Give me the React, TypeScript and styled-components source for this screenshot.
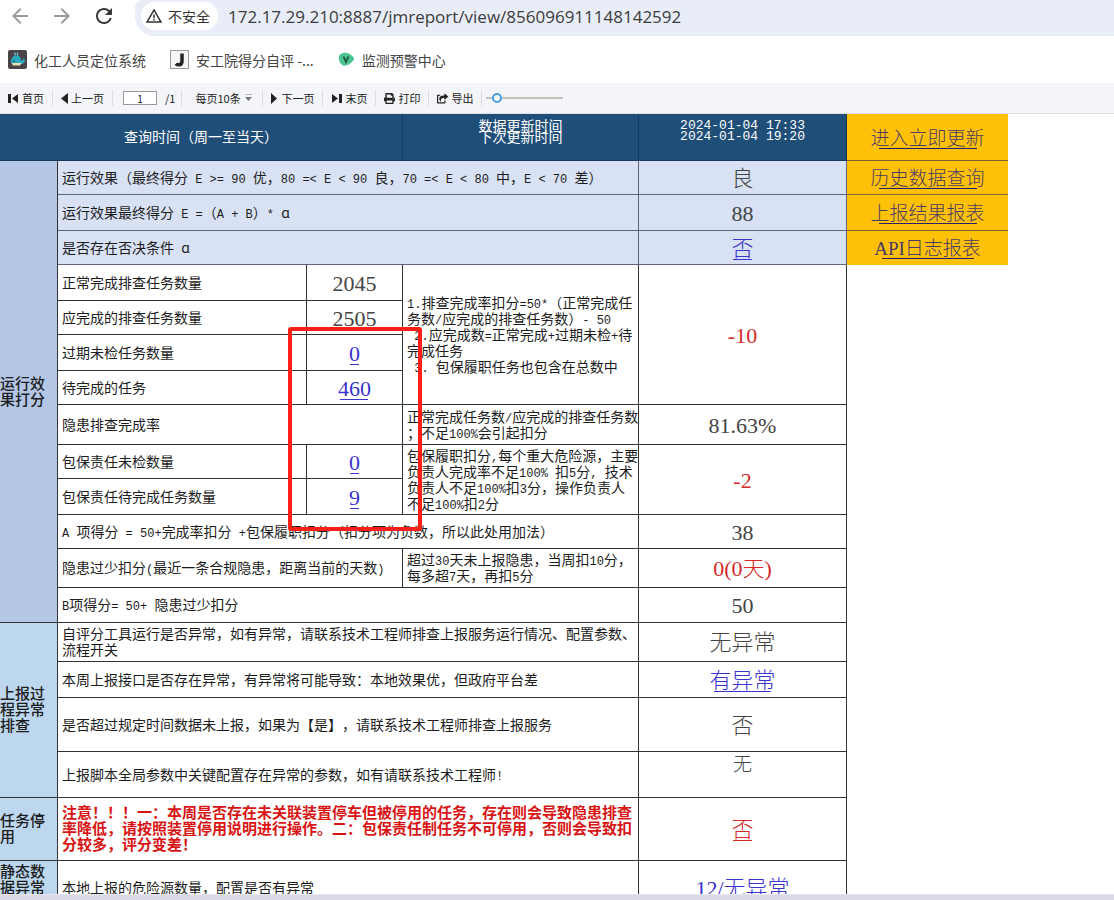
import React from 'react';
import styled, { createGlobalStyle, css } from 'styled-components';
import { MdArrowBack, MdArrowForward, MdRefresh, MdWarningAmber } from 'react-icons/md';
import { FaPrint, FaShareSquare } from 'react-icons/fa';

const cjk = '"Noto Sans CJK SC", sans-serif';

const GlobalStyle = createGlobalStyle`
  * { box-sizing: border-box; }
  body {
    margin: 0;
    background: #fff;
    font-family: ${cjk};
    color: #1c1c1c;
    text-spacing-trim: space-all;
  }
  button, input, select { font: inherit; color: inherit; }
`;

const Page = styled.div`
  display: flex;
  flex-direction: column;
  height: 100vh;
  overflow: hidden;
`;

/* ---------- browser chrome ---------- */

const AddressRow = styled.header`
  display: flex;
  align-items: stretch;
  flex: none;
  height: 36px;
`;

const NavButtons = styled.nav`
  display: flex;
  align-items: center;
  gap: 18px;
  padding: 0 19px 4px 8px;
`;

const NavButton = styled.button<{ $muted?: boolean }>`
  display: flex;
  padding: 0;
  border: 0;
  background: none;
  font-size: 24px;
  color: ${(p) => (p.$muted ? '#9b9b9b' : '#3a3a3a')};
`;

const Omnibox = styled.div`
  display: flex;
  align-items: flex-start;
  flex: 1;
  gap: 10px;
  padding: 2px 6px 0;
  border-radius: 8px 0 0 20px;
  background: #e9edf7;
`;

const SecurityChip = styled.button`
  display: flex;
  align-items: center;
  gap: 5px;
  height: 28px;
  padding: 0 8px 0 4px;
  border: 0;
  border-radius: 14px;
  background: #fff;
  font-size: 14px;
  color: #333;
  white-space: nowrap;

  svg { font-size: 18px; }
`;

const UrlInput = styled.input`
  flex: 1;
  min-width: 0;
  height: 28px;
  padding: 0;
  border: 0;
  outline: 0;
  background: none;
  font-family: "Open Sans", sans-serif;
  font-size: 17px;
  color: #3c3c3c;
`;

const Bookmarks = styled.nav`
  display: flex;
  align-items: center;
  flex: none;
  gap: 24px;
  height: 47px;
  padding: 0 8px;
`;

const Bookmark = styled.a`
  display: flex;
  align-items: center;
  gap: 7px;
  font-size: 14px;
  color: #444;
  text-decoration: none;
  white-space: nowrap;
`;

/* ---------- report toolbar ---------- */

const Toolbar = styled.div`
  display: flex;
  align-items: center;
  flex: none;
  height: 31px;
  border-bottom: 1px solid #dcdee2;
  background: #f4f5f8;
  font-size: 11px;
  color: #222;
`;

const group = css`
  display: flex;
  align-items: center;
  height: 16px;
  padding: 0 8px;
  border: 0;
  border-right: 1px solid #dcdcdf;
  background: none;
  white-space: nowrap;
`;

const ToolButton = styled.button`
  ${group}
  gap: 3px;
`;

const PageGroup = styled.label`
  ${group}
  gap: 8px;
  padding: 0 6px 0 10px;
`;

const PageInput = styled.input`
  width: 34px;
  height: 14px;
  padding: 0;
  border: 1px solid #999;
  background: #fff;
  font-size: 10px;
  text-align: center;
`;

const SizeGroup = styled.label`
  ${group}
  gap: 4px;
  padding: 0 10px 0 13px;
`;

const SizeSelect = styled.select`
  appearance: none;
  padding: 0;
  border: 0;
  background: none;
`;

const ZoomSlider = styled.input`
  appearance: none;
  width: 77px;
  height: 10px;
  margin: 0 0 0 4px;
  background: linear-gradient(#c4c0ba, #c4c0ba) center / 100% 2px no-repeat;

  &::-webkit-slider-thumb {
    appearance: none;
    width: 10px;
    height: 10px;
    border: 2px solid #4a9be0;
    border-radius: 50%;
    background: #fff;
  }
`;

/* ---------- report sheet ---------- */

const Sheet = styled.main`
  position: relative;
  flex: 1;
  min-height: 0;
  overflow: hidden;
`;

const Table = styled.table`
  table-layout: fixed;
  width: 1008px;
  border-collapse: separate;
  border-spacing: 0;
  font-size: 14px;
  line-height: 16px;
`;

const Col = styled.col<{ $w: number }>`
  width: ${(p) => p.$w}px;
`;

const Row = styled.tr<{ $h: number }>`
  height: ${(p) => p.$h}px;
`;

const cell = css`
  padding: 0 0 2px 4px;
  border: solid #333;
  border-width: 0 1px 1px 0;
  white-space: pre;
  text-align: left;
  font-weight: 400;
`;

const HeadCell = styled.th<{ $stacked?: boolean }>`
  ${cell}
  padding: 0 0 3px;
  border-color: #173a5c;
  background: #1f4e79;
  color: #fff;
  text-align: center;
  ${(p) => p.$stacked && css`
    padding-top: 6px;
    line-height: 11px;
    vertical-align: top;
  `}
`;

const GroupCell = styled.th<{ $bg: string; $top?: boolean }>`
  ${cell}
  padding: 2px 0 4px;
  background: ${(p) => p.$bg};
  font-size: 15px;
  font-weight: 500;
  vertical-align: ${(p) => (p.$top ? 'top' : 'middle')};
`;

const TextCell = styled.td<{ $tint?: boolean }>`
  ${cell}
  ${(p) => p.$tint && 'background: #d9e2f5; border-color: #5f6678;'}
`;

const WarningCell = styled(TextCell)`
  font-size: 15px;
  font-weight: 700;
  color: #d81414;
`;

const ValueCell = styled.td<{ $tint?: boolean; $red?: boolean; $top?: boolean }>`
  ${cell}
  padding: 2px 0 0;
  font-family: "Liberation Serif", ${cjk};
  font-size: 22px;
  font-weight: 300;
  line-height: 22px;
  text-align: center;
  color: ${(p) => (p.$red ? '#d42a2a' : '#444')};
  vertical-align: ${(p) => (p.$top ? 'top' : 'middle')};
  ${(p) => p.$top && 'font-size: 19px;'}
  ${(p) => p.$tint && 'background: #d9e2f5; border-color: #5f6678;'}
`;

const ActionCell = styled.td<{ $last?: boolean }>`
  ${cell}
  padding: 3px 0 0;
  border-right: 0;
  border-color: ${(p) => (p.$last ? '#ffc107' : '#7d6324')};
  background: #ffc107;
  font-family: "Liberation Serif", ${cjk};
  font-weight: 300;
  text-align: center;
`;

const CellLink = styled.a<{ $red?: boolean }>`
  display: inline-block;
  color: ${(p) => (p.$red ? '#d42a2a' : '#3a33cc')};
  background: linear-gradient(currentColor, currentColor) center bottom / 86% 1px no-repeat;
  text-decoration: none;
`;

const ActionLink = styled(CellLink)`
  font-size: 19px;
  line-height: 20px;
  color: #4a3a66;
  background-image: linear-gradient(#2a1c70, #2a1c70);
`;

const Latin = styled.span`
  font-family: "Liberation Mono", monospace;
  font-size: 12px;
  line-height: 0;
`;

const Stamp = styled.time`
  display: block;
  font-family: "Liberation Mono", monospace;
  font-size: 13px;
`;

const Highlight = styled.div`
  position: absolute;
  top: 213px;
  left: 288px;
  width: 134px;
  height: 204px;
  border: 4px solid #ff1f17;
  border-radius: 3px;
  pointer-events: none;
`;

const StatusBar = styled.footer`
  flex: none;
  height: 6px;
  border-top: 1px solid #e6e4ee;
  background: #dcd9e8;
`;

/* Sets half-width characters in the monospaced face. */
function Mixed({ children }: { children: string }) {
  return (
    <>
      {children.split(/([\x20-\x7e]+)/).map((run, i) =>
        i % 2 ? <Latin key={i}>{run}</Latin> : run
      )}
    </>
  );
}

const Triangle = ({ dir, bar }: { dir: 'left' | 'right'; bar?: boolean }) => (
  <svg width={bar ? 11 : 7} height="11" viewBox={bar ? '0 0 11 11' : '0 0 7 11'} fill="#222" aria-hidden="true">
    {dir === 'left' ? (
      <>
        {bar && <path d="M0 1h3v9H0z" />}
        <path d={bar ? 'M10 1v9L4 5.500z' : 'M7 0v11L0 5.500z'} />
      </>
    ) : (
      <>
        <path d={bar ? 'M1 1v9l6-4.500z' : 'M0 0v11l6-5.500z'} />
        {bar && <path d="M8 1h3v9H8z" />}
      </>
    )}
  </svg>
);

const WhaleIcon = () => (
  <svg width="19" height="19" viewBox="0 0 19 19" aria-hidden="true">
    <rect width="19" height="19" rx="2" fill="#4a4446" />
    <path d="M7 2.500v3M9.500 2.500v3" stroke="#7fd0d8" strokeWidth="1.200" />
    <path d="M3 12c0-4 2-6.500 5.500-6.500 3 0 4.500 2 4.500 5h1.500l.5-2 2 1c0 3-1.500 4.500-4 4.500H5c-1.500 0-2-1-2-2z" fill="#28a9bd" />
    <path d="M3.500 13h10l-1.500 2.500H5z" fill="#e8dfb0" />
    <circle cx="6" cy="11" r=".8" fill="#163c4a" />
  </svg>
);

const HookIcon = () => (
  <svg width="19" height="19" viewBox="0 0 19 19" aria-hidden="true">
    <rect x=".5" y=".5" width="18" height="18" fill="#f5f5f5" stroke="#999" />
    <path d="M12 3.500V11c0 2.600-1.200 3.800-3.200 3.800-1.200 0-2.200-.4-2.800-1.200" fill="none" stroke="#222" strokeWidth="3.500" />
  </svg>
);

const LeafIcon = () => (
  <svg width="17" height="17" viewBox="0 0 17 17" aria-hidden="true">
    <path d="M2 3.500C5 1 10 1 13 4c2 1.500 3 2.500 3 4s-2 3-4 4.500c-3 2.500-7 3-9 .5-2.500-3-3-7-1-9.500z" fill="#4cc490" />
    <path d="M5.500 5.500 8 11l2.500-5.500" fill="none" stroke="#1d4a3a" strokeWidth="1.600" />
  </svg>
);

export default function App() {
  return (
    <Page>
      <GlobalStyle />
      <AddressRow>
        <NavButtons>
          <NavButton $muted aria-label="后退"><MdArrowBack /></NavButton>
          <NavButton $muted aria-label="前进"><MdArrowForward /></NavButton>
          <NavButton aria-label="刷新"><MdRefresh /></NavButton>
        </NavButtons>
        <Omnibox>
          <SecurityChip><MdWarningAmber />不安全</SecurityChip>
          <UrlInput aria-label="地址" defaultValue="172.17.29.210:8887/jmreport/view/856096911148142592" />
        </Omnibox>
      </AddressRow>
      <Bookmarks>
        <Bookmark href="#"><WhaleIcon />化工人员定位系统</Bookmark>
        <Bookmark href="#"><HookIcon />安工院得分自评 -...</Bookmark>
        <Bookmark href="#"><LeafIcon />监测预警中心</Bookmark>
      </Bookmarks>

      <Toolbar>
        <ToolButton><Triangle dir="left" bar />首页</ToolButton>
        <ToolButton><Triangle dir="left" />上一页</ToolButton>
        <PageGroup><PageInput aria-label="页码" defaultValue="1" />/1</PageGroup>
        <SizeGroup>
          <SizeSelect aria-label="每页条数"><option>每页10条</option></SizeSelect>
          <svg width="7" height="8" viewBox="0 0 7 8" aria-hidden="true">
            <path d="M0 .5h7" stroke="#bbb" />
            <path d="M0 3h7L3.500 7z" fill="#777" />
          </svg>
        </SizeGroup>
        <ToolButton><Triangle dir="right" />下一页</ToolButton>
        <ToolButton><Triangle dir="right" bar />末页</ToolButton>
        <ToolButton><FaPrint />打印</ToolButton>
        <ToolButton><FaShareSquare />导出</ToolButton>
        <ZoomSlider type="range" aria-label="缩放" min="0" max="100" defaultValue="8" />
      </Toolbar>

      <Sheet>
        <Table>
          <colgroup>
            <Col $w={58} /><Col $w={249} /><Col $w={96} /><Col $w={236} /><Col $w={208} /><Col $w={161} />
          </colgroup>
          <tbody>
            <Row $h={47}>
              <HeadCell colSpan={3}>查询时间（周一至当天）</HeadCell>
              <HeadCell $stacked>{'数据更新时间\n下次更新时间'}</HeadCell>
              <HeadCell $stacked><Stamp>2024-01-04 17:33</Stamp><Stamp>2024-01-04 19:20</Stamp></HeadCell>
              <ActionCell><ActionLink href="#">进入立即更新</ActionLink></ActionCell>
            </Row>
            <Row $h={34}>
              <GroupCell rowSpan={13} $bg="#b4c7e7">{'运行效\n果打分'}</GroupCell>
              <TextCell colSpan={3} $tint><Mixed>{'运行效果（最终得分 E >= 90 优，80 =< E < 90 良，70 =< E < 80 中，E < 70 差）'}</Mixed></TextCell>
              <ValueCell $tint>良</ValueCell>
              <ActionCell><ActionLink href="#">历史数据查询</ActionLink></ActionCell>
            </Row>
            <Row $h={36}>
              <TextCell colSpan={3} $tint><Mixed>{'运行效果最终得分 E =（A + B）* ɑ'}</Mixed></TextCell>
              <ValueCell $tint>88</ValueCell>
              <ActionCell><ActionLink href="#">上报结果报表</ActionLink></ActionCell>
            </Row>
            <Row $h={34}>
              <TextCell colSpan={3} $tint><Mixed>{'是否存在否决条件 ɑ'}</Mixed></TextCell>
              <ValueCell $tint><CellLink href="#">否</CellLink></ValueCell>
              <ActionCell $last><ActionLink href="#">API日志报表</ActionLink></ActionCell>
            </Row>
            <Row $h={36}>
              <TextCell>正常完成排查任务数量</TextCell>
              <ValueCell>2045</ValueCell>
              <TextCell rowSpan={4}><Mixed>{'1.排查完成率扣分=50*（正常完成任\n务数/应完成的排查任务数）- 50\n 2.应完成数=正常完成+过期未检+待\n完成任务\n 3. 包保履职任务也包含在总数中'}</Mixed></TextCell>
              <ValueCell rowSpan={4} $red>-10</ValueCell>
            </Row>
            <Row $h={34}>
              <TextCell>应完成的排查任务数量</TextCell>
              <ValueCell>2505</ValueCell>
            </Row>
            <Row $h={36}>
              <TextCell>过期未检任务数量</TextCell>
              <ValueCell><CellLink href="#">0</CellLink></ValueCell>
            </Row>
            <Row $h={34}>
              <TextCell>待完成的任务</TextCell>
              <ValueCell><CellLink href="#">460</CellLink></ValueCell>
            </Row>
            <Row $h={40}>
              <TextCell colSpan={2}>隐患排查完成率</TextCell>
              <TextCell><Mixed>{'正常完成任务数/应完成的排查任务数\n；不足100%会引起扣分'}</Mixed></TextCell>
              <ValueCell>81.63%</ValueCell>
            </Row>
            <Row $h={34}>
              <TextCell>包保责任未检数量</TextCell>
              <ValueCell><CellLink href="#">0</CellLink></ValueCell>
              <TextCell rowSpan={2}><Mixed>{'包保履职扣分,每个重大危险源，主要\n负责人完成率不足100% 扣5分, 技术\n负责人不足100%扣3分，操作负责人\n不足100%扣2分'}</Mixed></TextCell>
              <ValueCell rowSpan={2} $red>-2</ValueCell>
            </Row>
            <Row $h={36}>
              <TextCell>包保责任待完成任务数量</TextCell>
              <ValueCell><CellLink href="#">9</CellLink></ValueCell>
            </Row>
            <Row $h={34}>
              <TextCell colSpan={3}><Mixed>{'A 项得分 = 50+完成率扣分 +包保履职扣分（扣分项为负数，所以此处用加法）'}</Mixed></TextCell>
              <ValueCell>38</ValueCell>
            </Row>
            <Row $h={39}>
              <TextCell colSpan={2}><Mixed>{'隐患过少扣分(最近一条合规隐患，距离当前的天数)'}</Mixed></TextCell>
              <TextCell><Mixed>{'超过30天未上报隐患，当周扣10分，\n每多超7天，再扣5分'}</Mixed></TextCell>
              <ValueCell $red>0(0天)</ValueCell>
            </Row>
            <Row $h={35}>
              <TextCell colSpan={3}><Mixed>{'B项得分= 50+ 隐患过少扣分'}</Mixed></TextCell>
              <ValueCell>50</ValueCell>
            </Row>
            <Row $h={39}>
              <GroupCell rowSpan={4} $bg="#bdd7ee">{'上报过\n程异常\n排查'}</GroupCell>
              <TextCell colSpan={3}>{'自评分工具运行是否异常，如有异常，请联系技术工程师排查上报服务运行情况、配置参数、\n流程开关'}</TextCell>
              <ValueCell>无异常</ValueCell>
            </Row>
            <Row $h={36}>
              <TextCell colSpan={3}>本周上报接口是否存在异常，有异常将可能导致：本地效果优，但政府平台差</TextCell>
              <ValueCell><CellLink href="#">有异常</CellLink></ValueCell>
            </Row>
            <Row $h={54}>
              <TextCell colSpan={3}>是否超过规定时间数据未上报，如果为【是】，请联系技术工程师排查上报服务</TextCell>
              <ValueCell>否</ValueCell>
            </Row>
            <Row $h={46}>
              <TextCell colSpan={3}><Mixed>{'上报脚本全局参数中关键配置存在异常的参数，如有请联系技术工程师!'}</Mixed></TextCell>
              <ValueCell $top>无</ValueCell>
            </Row>
            <Row $h={63}>
              <GroupCell $bg="#bdd7ee">{'任务停\n用'}</GroupCell>
              <WarningCell colSpan={3}>{'注意！！！一：本周是否存在未关联装置停车但被停用的任务，存在则会导致隐患排查\n率降低，请按照装置停用说明进行操作。二：包保责任制任务不可停用，否则会导致扣\n分较多，评分变差！'}</WarningCell>
              <ValueCell><CellLink href="#" $red>否</CellLink></ValueCell>
            </Row>
            <Row $h={54}>
              <GroupCell $bg="#bdd7ee" $top>{'静态数\n据异常'}</GroupCell>
              <TextCell colSpan={3}>本地上报的危险源数量，配置是否有异常</TextCell>
              <ValueCell><CellLink href="#">12/无异常</CellLink></ValueCell>
            </Row>
          </tbody>
        </Table>
        <Highlight />
      </Sheet>
      <StatusBar />
    </Page>
  );
}
